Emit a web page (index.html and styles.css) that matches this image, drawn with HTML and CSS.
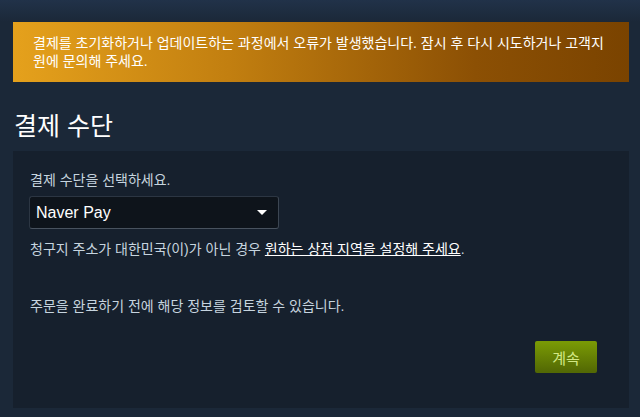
FILE: index.html
```html
<!DOCTYPE html>
<html lang="ko">
<head>
    <meta charset="UTF-8">
    <meta name="viewport" content="width=device-width, initial-scale=1.0">
    <title>결제 수단</title>
    <link rel="stylesheet" href="styles.css">
</head>
<body>
    <div class="page">
        <div class="error-banner">
            결제를 초기화하거나 업데이트하는 과정에서 오류가 발생했습니다. 잠시 후 다시 시도하거나 고객지원에 문의해 주세요.
        </div>

        <h2 class="section-title">결제 수단</h2>

        <div class="panel">
            <div class="field-label">결제 수단을 선택하세요.</div>
            <div class="dropdown">
                <span class="dropdown-value">Naver Pay</span>
                <svg class="dropdown-arrow" width="10" height="6" viewBox="0 0 10 6">
                    <polygon points="0,0 10,0 5,5" fill="#ffffff"/>
                </svg>
            </div>
            <p class="billing-note">청구지 주소가 대한민국(이)가 아닌 경우 <a href="#" class="store-link">원하는 상점 지역을 설정해 주세요</a>.</p>
            <p class="review-note">주문을 완료하기 전에 해당 정보를 검토할 수 있습니다.</p>
            <div class="actions">
                <a href="#" class="btn-green">계속</a>
            </div>
        </div>
    </div>
</body>
</html>
```

FILE: styles.css
```css
body {
    margin: 0;
    background: linear-gradient(to bottom, #213249 0, #1b2838 22px) #1b2838;
    font-family: "Liberation Sans", "Noto Sans CJK KR", sans-serif;
    font-size: 14px;
    color: #c6d4df;
}

.page {
    padding: 22px 11px 9px 13px;
}

/* orange warning strip on top */
.error-banner {
    background: linear-gradient(to right, #e5a11c 0%, #c27f10 35%, #8c5004 75%, #7a4300 100%);
    color: #ffffff;
    padding: 12px 20px;
    line-height: 18px;
}

.section-title {
    margin: 0;
    padding: 29px 0 0 1px;
    height: 40px;
    font-size: 25px;
    font-weight: normal;
    line-height: 30px;
    color: #ffffff;
}

.panel {
    background-color: #16202d;
    padding: 20px 32px 35px 16px;
}

.field-label {
    line-height: 18px;
    padding-left: 1px;
    margin-bottom: 7px;
}

.dropdown {
    width: 250px;
    height: 33px;
    box-sizing: border-box;
    display: flex;
    align-items: center;
    justify-content: space-between;
    padding: 0 11px 0 6px;
    background-color: #0e141b;
    border: 1px solid #2c3643;
    border-bottom-color: #48525e;
    border-right-color: #3c4652;
    border-radius: 3px;
}

.dropdown-value {
    font-size: 16px;
    color: #ffffff;
}

.billing-note {
    margin: 11px 0 0 1px;
    line-height: 18px;
}

.store-link {
    color: #ffffff;
    text-decoration: underline;
}

.review-note {
    margin: 39px 0 0 1px;
    line-height: 18px;
}

.actions {
    display: flex;
    justify-content: flex-end;
    margin-top: 26px;
}

.btn-green {
    display: flex;
    align-items: center;
    justify-content: center;
    width: 62px;
    height: 32px;
    border-radius: 2px;
    background: linear-gradient(to bottom, #799905 5%, #536904 95%);
    color: #d2e885;
    font-size: 15px;
    text-decoration: none;
}
```
